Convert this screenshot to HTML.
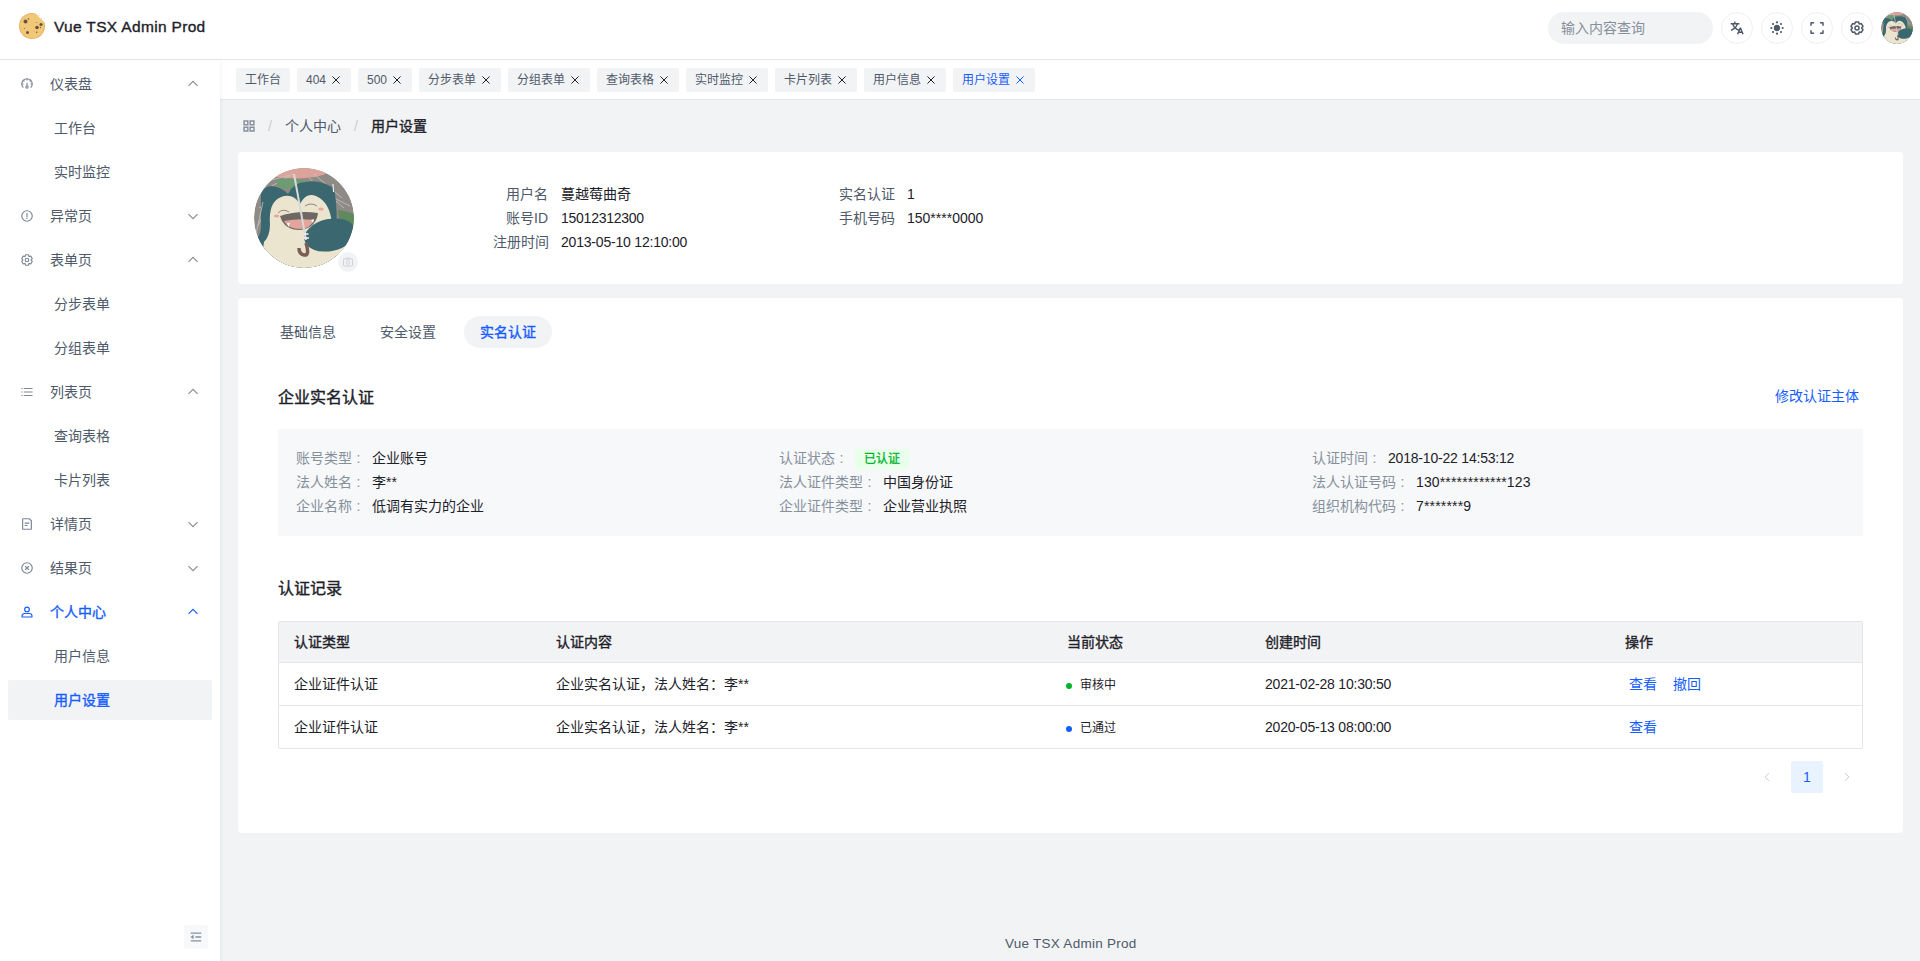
<!DOCTYPE html>
<html lang="zh-CN"><head><meta charset="utf-8">
<style>
*{box-sizing:border-box;margin:0;padding:0}
html,body{width:1920px;height:961px;overflow:hidden;background:#f2f3f5;font-family:"Liberation Sans",sans-serif;color:#1d2129;font-size:14px;line-height:20px}
.abs{position:absolute}
svg{display:block}
.ic{fill:none;stroke:currentColor;stroke-width:4}
#nav{left:0;top:0;width:1920px;height:60px;background:#fff;border-bottom:1px solid #e5e6eb}
#side{left:0;top:60px;width:220px;height:901px;background:#fff;box-shadow:0 2px 5px rgba(0,0,0,.08)}
#tabbar{left:220px;top:60px;width:1700px;height:40px;background:#fff;border-bottom:1px solid #e5e6eb}
.mi{position:absolute;left:8px;width:204px;height:40px;border-radius:2px;color:#4e5969}
.mi .t{position:absolute;left:42px;top:10px;white-space:nowrap}
.mi.sub .t{left:46px}
.mi.act .i,.mi.act .a{color:#165dff}
.mi .i{color:#7d8795;position:absolute;left:12px;top:13px;width:14px;height:14px}
.mi .a{position:absolute;left:178px;top:13px;width:14px;height:14px;color:#86909c}
.tag{position:absolute;top:68px;height:24px;background:#f2f3f5;border-radius:2px;color:#4e5969;font-size:12px;line-height:24px;padding-left:9px;white-space:nowrap}
.tag svg{position:absolute;top:6px;width:12px;height:12px;color:#1d2129}
.tag.act svg{color:#165dff}
.card{position:absolute;background:#fff;border-radius:4px}
.lbl{color:#86909c}
.t14{position:absolute;white-space:nowrap;font-size:14px;line-height:20px}
.t12{position:absolute;white-space:nowrap;font-size:12px;line-height:20px}
.link{color:#165dff}
.med{font-weight:normal;-webkit-text-stroke:0.35px currentColor}
</style></head><body>

<!-- NAVBAR -->
<div id="nav" class="abs">
  <svg class="abs" style="left:18px;top:12px" width="28" height="28" viewBox="0 0 28 28">
    <circle cx="14" cy="14" r="13" fill="#e4ad5a"/>
    <circle cx="14" cy="14" r="12.2" fill="#f0c878"/>
    <path d="M16 -1 L17.5 1.2 Q21.5 5.5 26.8 10.8 L29 13 L29 -1 Z" fill="#fff"/><circle cx="21" cy="3.6" r="0.5" fill="#f0c878"/><circle cx="23.5" cy="6.6" r="0.5" fill="#f0c878"/>
    
    <circle cx="7.5" cy="9.5" r="2" fill="#6b5045"/>
    <circle cx="10.5" cy="7" r="0.8" fill="#6b5045"/>
    <circle cx="19" cy="15.5" r="1.8" fill="#6b5045"/>
    <circle cx="23" cy="12.5" r="1.6" fill="#6b5045"/>
    <circle cx="9.5" cy="20.5" r="1.5" fill="#6b5045"/>
    
    <circle cx="22.4" cy="15.5" r="0.55" fill="#333"/><circle cx="18.7" cy="20.3" r="0.7" fill="#6b5045"/><circle cx="6.4" cy="16.4" r="0.5" fill="#6b5045"/><circle cx="18.4" cy="10.5" r="0.5" fill="#8a6a50"/>
    <circle cx="16" cy="19" r="0.6" fill="#e3a550"/><circle cx="6" cy="16" r="0.6" fill="#e3a550"/>
  </svg>
  <div class="abs" style="left:54px;top:16.5px;font-size:15.5px;letter-spacing:0.33px;line-height:20px;color:#1d2129;white-space:nowrap;-webkit-text-stroke:0.35px #1d2129">Vue TSX Admin Prod</div>

  <div class="abs" style="left:1548px;top:12px;width:165px;height:32px;border-radius:16px;background:#f2f3f5"></div>
  <div class="t14" style="left:1561px;top:18px;color:#86909c">输入内容查询</div>

  <div class="abs nbtn" style="left:1721px"><svg class="ic" viewBox="0 0 48 48" width="14" height="14"><path d="m42 43-2.385-6M26 43l2.384-6m11.231 0-.795-2-4.18-10h-1.28l-4.181 10-.795 2m11.231 0h-11.23M17 5l1 5M5 11h26M11 11s1.889 7.826 6.611 12.174C22.333 27.522 30 31 30 31"/><path d="M25.028 11s-1.889 7.826-6.611 12.174C13.694 27.522 6 31 6 31"/></svg></div>
  <div class="abs nbtn" style="left:1761px"><svg viewBox="0 0 48 48" width="14" height="14" fill="currentColor"><circle cx="24" cy="24" r="9.5"/><circle cx="24" cy="7" r="3.2"/><circle cx="24" cy="41" r="3.2"/><circle cx="7" cy="24" r="3.2"/><circle cx="41" cy="24" r="3.2"/><circle cx="12" cy="12" r="3.2"/><circle cx="36" cy="12" r="3.2"/><circle cx="12" cy="36" r="3.2"/><circle cx="36" cy="36" r="3.2"/></svg></div>
  <div class="abs nbtn" style="left:1801px"><svg class="ic" viewBox="0 0 48 48" width="14" height="14"><path d="M42 17V9a1 1 0 0 0-1-1h-8M6 17V9a1 1 0 0 1 1-1h8m27 23v8a1 1 0 0 1-1 1h-8M6 31v8a1 1 0 0 0 1 1h8"/></svg></div>
  <div class="abs nbtn" style="left:1841px"><svg class="ic" viewBox="0 0 48 48" width="14" height="14"><path d="M18.797 6.732A1 1 0 0 1 19.76 6h8.48a1 1 0 0 1 .964.732l1.285 4.628a1 1 0 0 0 1.213.7l4.651-1.2a1 1 0 0 1 1.116.468l4.24 7.344a1 1 0 0 1-.153 1.2L38.193 23.3a1 1 0 0 0 0 1.402l3.364 3.427a1 1 0 0 1 .153 1.2l-4.240 7.344a1 1 0 0 1-1.116.468l-4.65-1.2a1 1 0 0 0-1.214.7l-1.285 4.628a1 1 0 0 1-.964.732h-8.48a1 1 0 0 1-.963-.732L17.51 36.64a1 1 0 0 0-1.213-.7l-4.65 1.2a1 1 0 0 1-1.116-.468l-4.24-7.344a1 1 0 0 1 .153-1.2L9.809 24.7a1 1 0 0 0 0-1.402l-3.364-3.427a1 1 0 0 1-.153-1.2l4.24-7.344a1 1 0 0 1 1.116-.468l4.65 1.2a1 1 0 0 0 1.213-.7l1.286-4.628Z"/><path d="M30 24a6 6 0 1 1-12 0 6 6 0 0 1 12 0Z"/></svg></div>
  <div class="abs" style="left:1881px;top:12px;width:32px;height:32px;border-radius:50%;overflow:hidden" id="navav"><svg viewBox="0 0 100 100" width="32" height="32" style="display:block">
<defs><clipPath id="cc2"><circle cx="50" cy="50" r="50"/></clipPath></defs>
<g clip-path="url(#cc2)">
<rect width="100" height="100" fill="#8e8a85"/>
<ellipse cx="42" cy="1" rx="34" ry="9.5" fill="#dba39a"/>
<path d="M10 14 L40 6 M14 20 L36 8 M60 6 L88 30 M55 10 L90 40 M5 40 L20 30 M4 58 L12 40 M80 30 L96 38" stroke="#c9c4bf" stroke-width="0.8"/>
<path d="M22 12 Q36 8 54 14 Q44 22 24 20 Z" fill="#6f9b73"/>
<path d="M7 26 Q10 19 16 18 Q26 18 34 26 Q40 14 52 14 Q62 12 72 16 L80 20 Q84 40 82 60 L86 100 L0 100 L0 72 Q6 70 7 60 Z" fill="#3b6870"/><path d="M1.5 68 L9 34" stroke="#c9c4bf" stroke-width="0.8"/>
<path d="M84 42 Q96 44 100 46 L100 60 L86 58 Z" fill="#5e8a5e"/>
<path d="M16 56 Q14 32 30 28 Q40 26 46 36 Q52 24 62 28 Q76 34 78 56 L100 72 L100 100 L6 100 L10 74 Q16 68 16 56 Z" fill="#ebe5cf"/>
<path d="M26 48 Q44 42 64 45 Q62 60 46 62 Q30 62 26 48 Z" fill="#6d6864"/>
<path d="M30 53 Q44 50 60 52 Q56 61 46 61 Q34 61 30 53 Z" fill="#e3a49b"/>
<path d="M33 55 l1.6 4 l1.2 -4 z M60 51 l-1 4 l-2 -3 z" fill="#fff"/>
<path d="M24 45 Q29 40 35 44" stroke="#8a7a70" stroke-width="0.9" fill="none"/>
<path d="M51 38 Q57 34 63 38" stroke="#8a7a70" stroke-width="0.9" fill="none"/>
<ellipse cx="22.5" cy="48" rx="2.8" ry="1.6" fill="#e8a8a0"/>
<ellipse cx="67" cy="41" rx="2.8" ry="1.6" fill="#e8a8a0"/>
<ellipse cx="76" cy="67" rx="26" ry="16" transform="rotate(-12 76 67)" fill="#3b6870"/>
<path d="M40 6 L52 72" stroke="#d8d8d8" stroke-width="2"/>
<path d="M49.5 66 h5 M50 70 h5" stroke="#f4f4f4" stroke-width="1.6"/>
<path d="M52 75 Q56 88 50 87 Q45 86 45 80" stroke="#7d5e55" stroke-width="3.5" fill="none"/>
<path d="M79 16 l0.6 8" stroke="#eee" stroke-width="1.2"/>
</g>
</svg>
</div>
</div>
<style>
.nbtn{top:12px;width:32px;height:32px;border-radius:50%;border:1px solid #eef0f3;color:#4e5969;background:#fff}
.nbtn svg{position:absolute;left:7px;top:7px;width:16px;height:16px}
.nbtn .ic{stroke-width:4.5}
</style>

<!-- SIDEBAR -->
<div id="tabbar" class="abs"></div>
<div id="side" class="abs"></div>
<div id="menu">
<div class="mi" style="top:64px"><svg class="i ic" viewBox="0 0 48 48"><path d="M11.3 36.7A18 18 0 1 1 36.7 36.7M24 6v6M11.3 11.3l4 4M36.7 11.3l-4 4M6 24h6M42 24h-6M24 20v10"/><circle cx="24" cy="34" r="4"/></svg><div class="t">仪表盘</div><svg class="a ic" viewBox="0 0 48 48"><path d="M39.6 30.557 24.043 15 8.487 30.557"/></svg></div>
<div class="mi sub" style="top:108px"><div class="t">工作台</div></div>
<div class="mi sub" style="top:152px"><div class="t">实时监控</div></div>
<div class="mi" style="top:196px"><svg class="i ic" viewBox="0 0 48 48"><path d="M24 28V14m0 16v4M6 24c0-9.941 8.059-18 18-18s18 8.059 18 18-8.059 18-18 18S6 33.941 6 24Z"/></svg><div class="t">异常页</div><svg class="a ic" viewBox="0 0 48 48"><path d="M39.6 17.443 24.043 33 8.487 17.443"/></svg></div>
<div class="mi" style="top:240px"><svg class="i ic" viewBox="0 0 48 48"><path d="M18.797 6.732A1 1 0 0 1 19.76 6h8.48a1 1 0 0 1 .964.732l1.285 4.628a1 1 0 0 0 1.213.7l4.651-1.2a1 1 0 0 1 1.116.468l4.24 7.344a1 1 0 0 1-.153 1.2L38.193 23.3a1 1 0 0 0 0 1.402l3.364 3.427a1 1 0 0 1 .153 1.2l-4.240 7.344a1 1 0 0 1-1.116.468l-4.65-1.2a1 1 0 0 0-1.214.7l-1.285 4.628a1 1 0 0 1-.964.732h-8.48a1 1 0 0 1-.963-.732L17.51 36.64a1 1 0 0 0-1.213-.7l-4.65 1.2a1 1 0 0 1-1.116-.468l-4.24-7.344a1 1 0 0 1 .153-1.2L9.809 24.7a1 1 0 0 0 0-1.402l-3.364-3.427a1 1 0 0 1-.153-1.2l4.24-7.344a1 1 0 0 1 1.116-.468l4.65 1.2a1 1 0 0 0 1.213-.7l1.286-4.628Z"/><path d="M30 24a6 6 0 1 1-12 0 6 6 0 0 1 12 0Z"/></svg><div class="t">表单页</div><svg class="a ic" viewBox="0 0 48 48"><path d="M39.6 30.557 24.043 15 8.487 30.557"/></svg></div>
<div class="mi sub" style="top:284px"><div class="t">分步表单</div></div>
<div class="mi sub" style="top:328px"><div class="t">分组表单</div></div>
<div class="mi" style="top:372px"><svg class="i ic" viewBox="0 0 48 48"><path d="M13 24h30M5 12h4m4 24h30M13 12h30M5 24h4M5 36h4"/></svg><div class="t">列表页</div><svg class="a ic" viewBox="0 0 48 48"><path d="M39.6 30.557 24.043 15 8.487 30.557"/></svg></div>
<div class="mi sub" style="top:416px"><div class="t">查询表格</div></div>
<div class="mi sub" style="top:460px"><div class="t">卡片列表</div></div>
<div class="mi" style="top:504px"><svg class="i ic" viewBox="0 0 48 48"><path d="M16 21h16m-16 8h10m11 13H11a2 2 0 0 1-2-2V8a2 2 0 0 1 2-2h21l7 7v27a2 2 0 0 1-2 2Z"/></svg><div class="t">详情页</div><svg class="a ic" viewBox="0 0 48 48"><path d="M39.6 17.443 24.043 33 8.487 17.443"/></svg></div>
<div class="mi" style="top:548px"><svg class="i ic" viewBox="0 0 48 48"><path d="m17.643 17.643 6.364 6.364m0 0 6.364 6.364m-6.364-6.364 6.364-6.364m-6.364 6.364-6.364 6.364M42 24c0 9.941-8.059 18-18 18S6 33.941 6 24 14.059 6 24 6s18 8.059 18 18Z"/></svg><div class="t">结果页</div><svg class="a ic" viewBox="0 0 48 48"><path d="M39.6 17.443 24.043 33 8.487 17.443"/></svg></div>
<div class="mi act" style="top:592px;color:#165dff"><svg class="i ic" viewBox="0 0 48 48"><path d="M7 37c0-4.97 4.03-8 9-8h16c4.97 0 9 3.03 9 8v3a1 1 0 0 1-1 1H8a1 1 0 0 1-1-1v-3Z"/><path d="M32 15a8 8 0 1 1-16 0 8 8 0 0 1 16 0Z"/></svg><div class="t med">个人中心</div><svg class="a ic" viewBox="0 0 48 48"><path d="M39.6 30.557 24.043 15 8.487 30.557"/></svg></div>
<div class="mi sub" style="top:636px"><div class="t">用户信息</div></div>
<div class="mi sub" style="top:680px;background:#f2f3f5;color:#165dff"><div class="t med">用户设置</div></div>
</div>

<!-- TABBAR -->

<div class="tag" style="left:236px;width:54px">工作台</div>
<div class="tag" style="left:297px;width:54px">404<svg class="ic" style="left:33px;stroke-width:4" viewBox="0 0 48 48"><path d="M9.857 9.858 24 24m0 0 14.142 14.142M24 24 38.142 9.858M24 24 9.857 38.142"/></svg></div>
<div class="tag" style="left:358px;width:54px">500<svg class="ic" style="left:33px;stroke-width:4" viewBox="0 0 48 48"><path d="M9.857 9.858 24 24m0 0 14.142 14.142M24 24 38.142 9.858M24 24 9.857 38.142"/></svg></div>
<div class="tag" style="left:419px;width:82px">分步表单<svg class="ic" style="left:61px;stroke-width:4" viewBox="0 0 48 48"><path d="M9.857 9.858 24 24m0 0 14.142 14.142M24 24 38.142 9.858M24 24 9.857 38.142"/></svg></div>
<div class="tag" style="left:508px;width:82px">分组表单<svg class="ic" style="left:61px;stroke-width:4" viewBox="0 0 48 48"><path d="M9.857 9.858 24 24m0 0 14.142 14.142M24 24 38.142 9.858M24 24 9.857 38.142"/></svg></div>
<div class="tag" style="left:597px;width:82px">查询表格<svg class="ic" style="left:61px;stroke-width:4" viewBox="0 0 48 48"><path d="M9.857 9.858 24 24m0 0 14.142 14.142M24 24 38.142 9.858M24 24 9.857 38.142"/></svg></div>
<div class="tag" style="left:686px;width:82px">实时监控<svg class="ic" style="left:61px;stroke-width:4" viewBox="0 0 48 48"><path d="M9.857 9.858 24 24m0 0 14.142 14.142M24 24 38.142 9.858M24 24 9.857 38.142"/></svg></div>
<div class="tag" style="left:775px;width:82px">卡片列表<svg class="ic" style="left:61px;stroke-width:4" viewBox="0 0 48 48"><path d="M9.857 9.858 24 24m0 0 14.142 14.142M24 24 38.142 9.858M24 24 9.857 38.142"/></svg></div>
<div class="tag" style="left:864px;width:82px">用户信息<svg class="ic" style="left:61px;stroke-width:4" viewBox="0 0 48 48"><path d="M9.857 9.858 24 24m0 0 14.142 14.142M24 24 38.142 9.858M24 24 9.857 38.142"/></svg></div>
<div class="tag act" style="left:953px;width:82px;color:#165dff">用户设置<svg class="ic" style="left:61px;stroke-width:4" viewBox="0 0 48 48"><path d="M9.857 9.858 24 24m0 0 14.142 14.142M24 24 38.142 9.858M24 24 9.857 38.142"/></svg></div>


<!-- BREADCRUMB -->
<svg class="abs ic" style="left:242px;top:119px;color:#86909c;stroke-width:5" width="14" height="14" viewBox="0 0 48 48"><path d="M7 7h13v13H7zM28 7h13v13H28zM7 28h13v13H7zM28 28h13v13H28z"/></svg>
<div class="t14" style="left:268px;top:116px;color:#c9cdd4">/</div>
<div class="t14" style="left:285px;top:116px;color:#4e5969">个人中心</div>
<div class="t14" style="left:354px;top:116px;color:#c9cdd4">/</div>
<div class="t14 med" style="left:371px;top:116px;color:#1d2129">用户设置</div>

<!-- CARD 1 -->
<div class="card" style="left:238px;top:152px;width:1665px;height:132px"></div>
<div id="bigav" class="abs" style="left:254px;top:168px;width:100px;height:100px;border-radius:50%;overflow:hidden"><svg viewBox="0 0 100 100" width="100" height="100" style="display:block">
<defs><clipPath id="cc1"><circle cx="50" cy="50" r="50"/></clipPath></defs>
<g clip-path="url(#cc1)">
<rect width="100" height="100" fill="#8e8a85"/>
<ellipse cx="42" cy="1" rx="34" ry="9.5" fill="#dba39a"/>
<path d="M10 14 L40 6 M14 20 L36 8 M60 6 L88 30 M55 10 L90 40 M5 40 L20 30 M4 58 L12 40 M80 30 L96 38" stroke="#c9c4bf" stroke-width="0.8"/>
<path d="M22 12 Q36 8 54 14 Q44 22 24 20 Z" fill="#6f9b73"/>
<path d="M7 26 Q10 19 16 18 Q26 18 34 26 Q40 14 52 14 Q62 12 72 16 L80 20 Q84 40 82 60 L86 100 L0 100 L0 72 Q6 70 7 60 Z" fill="#3b6870"/><path d="M1.5 68 L9 34" stroke="#c9c4bf" stroke-width="0.8"/>
<path d="M84 42 Q96 44 100 46 L100 60 L86 58 Z" fill="#5e8a5e"/>
<path d="M16 56 Q14 32 30 28 Q40 26 46 36 Q52 24 62 28 Q76 34 78 56 L100 72 L100 100 L6 100 L10 74 Q16 68 16 56 Z" fill="#ebe5cf"/>
<path d="M26 48 Q44 42 64 45 Q62 60 46 62 Q30 62 26 48 Z" fill="#6d6864"/>
<path d="M30 53 Q44 50 60 52 Q56 61 46 61 Q34 61 30 53 Z" fill="#e3a49b"/>
<path d="M33 55 l1.6 4 l1.2 -4 z M60 51 l-1 4 l-2 -3 z" fill="#fff"/>
<path d="M24 45 Q29 40 35 44" stroke="#8a7a70" stroke-width="0.9" fill="none"/>
<path d="M51 38 Q57 34 63 38" stroke="#8a7a70" stroke-width="0.9" fill="none"/>
<ellipse cx="22.5" cy="48" rx="2.8" ry="1.6" fill="#e8a8a0"/>
<ellipse cx="67" cy="41" rx="2.8" ry="1.6" fill="#e8a8a0"/>
<ellipse cx="76" cy="67" rx="26" ry="16" transform="rotate(-12 76 67)" fill="#3b6870"/>
<path d="M40 6 L52 72" stroke="#d8d8d8" stroke-width="2"/>
<path d="M49.5 66 h5 M50 70 h5" stroke="#f4f4f4" stroke-width="1.6"/>
<path d="M52 75 Q56 88 50 87 Q45 86 45 80" stroke="#7d5e55" stroke-width="3.5" fill="none"/>
<path d="M79 16 l0.6 8" stroke="#eee" stroke-width="1.2"/>
</g>
</svg>
</div>
<div class="abs" style="left:338px;top:252px;width:20px;height:20px;border-radius:50%;background:#f2f3f5"></div>
<svg class="abs ic" style="left:342px;top:256px;color:#c9cdd4;stroke-width:3.5" width="12" height="12" viewBox="0 0 48 48"><path d="m33 12-1.862-3.724A.5.5 0 0 0 30.691 8H17.309a.5.5 0 0 0-.447.276L15 12m16 14a7 7 0 1 1-14 0 7 7 0 0 1 14 0ZM7 40h34a1 1 0 0 0 1-1V13a1 1 0 0 0-1-1H7a1 1 0 0 0-1 1v26a1 1 0 0 0 1 1Z"/></svg>

<div class="t14 lbl" style="left:493px;top:184px;width:55px;text-align:right;color:#4e5969">用户名</div>
<div class="t14" style="left:561px;top:184px">蔓越莓曲奇</div>
<div class="t14 lbl" style="left:493px;top:208px;width:55px;text-align:right;color:#4e5969">账号ID</div>
<div class="t14" style="left:561px;top:208px;letter-spacing:-0.25px">15012312300</div>
<div class="t14 lbl" style="left:493px;top:232px;width:55px;text-align:right;color:#4e5969">注册时间</div>
<div class="t14" style="left:561px;top:232px;letter-spacing:-0.2px">2013-05-10 12:10:00</div>
<div class="t14 lbl" style="left:839px;top:184px;color:#4e5969">实名认证</div>
<div class="t14" style="left:907px;top:184px">1</div>
<div class="t14 lbl" style="left:839px;top:208px;color:#4e5969">手机号码</div>
<div class="t14" style="left:907px;top:208px">150****0000</div>

<!-- CARD 2 -->
<div class="card" style="left:238px;top:298px;width:1665px;height:535px"></div>
<div class="t14" style="left:280px;top:322px;color:#4e5969">基础信息</div>
<div class="t14" style="left:380px;top:322px;color:#4e5969">安全设置</div>
<div class="abs" style="left:464px;top:316px;width:88px;height:32px;border-radius:16px;background:#f2f3f5"></div>
<div class="t14 med" style="left:480px;top:322px;color:#165dff">实名认证</div>

<div class="abs med" style="left:278px;top:388px;font-size:16px;line-height:20px;white-space:nowrap;-webkit-text-stroke:0.4px #1d2129">企业实名认证</div>
<div class="t14 link" style="left:1775px;top:386px">修改认证主体</div>

<div class="abs" style="left:278px;top:429px;width:1585px;height:107px;background:#f7f8fa"></div>
<div class="t14 lbl" style="left:296px;top:448px">账号类型<span style="margin-left:4.5px">:</span></div><div class="t14" style="left:372px;top:448px">企业账号</div>
<div class="t14 lbl" style="left:296px;top:472px">法人姓名<span style="margin-left:4.5px">:</span></div><div class="t14" style="left:372px;top:472px">李**</div>
<div class="t14 lbl" style="left:296px;top:496px">企业名称<span style="margin-left:4.5px">:</span></div><div class="t14" style="left:372px;top:496px">低调有实力的企业</div>

<div class="t14 lbl" style="left:779px;top:448px">认证状态<span style="margin-left:4.5px">:</span></div>
<div class="abs" style="left:855px;top:449px;width:54px;height:20px;background:#e8ffea;border-radius:2px"></div>
<div class="t12" style="left:864px;top:449px;color:#00b42a;-webkit-text-stroke:0.3px #00b42a">已认证</div>
<div class="t14 lbl" style="left:779px;top:472px">法人证件类型<span style="margin-left:4.5px">:</span></div><div class="t14" style="left:883px;top:472px">中国身份证</div>
<div class="t14 lbl" style="left:779px;top:496px">企业证件类型<span style="margin-left:4.5px">:</span></div><div class="t14" style="left:883px;top:496px">企业营业执照</div>

<div class="t14 lbl" style="left:1312px;top:448px">认证时间<span style="margin-left:4.5px">:</span></div><div class="t14" style="left:1388px;top:448px;letter-spacing:-0.2px">2018-10-22 14:53:12</div>
<div class="t14 lbl" style="left:1312px;top:472px">法人认证号码<span style="margin-left:4.5px">:</span></div><div class="t14" style="left:1416px;top:472px;letter-spacing:0.14px">130************123</div>
<div class="t14 lbl" style="left:1312px;top:496px">组织机构代码<span style="margin-left:4.5px">:</span></div><div class="t14" style="left:1416px;top:496px;letter-spacing:0.17px">7*******9</div>

<div class="abs med" style="left:278px;top:579px;font-size:16px;line-height:20px;white-space:nowrap;-webkit-text-stroke:0.4px #1d2129">认证记录</div>

<!-- TABLE -->
<div class="abs" style="left:278px;top:621px;width:1585px;height:128px;border:1px solid #e5e6eb;border-radius:2px;overflow:hidden">
  <div class="abs" style="left:0;top:0;width:1583px;height:41px;background:#f2f3f5;border-bottom:1px solid #e5e6eb"></div>
  <div class="abs" style="left:0;top:83px;width:1583px;height:1px;background:#e5e6eb"></div>
</div>
<div class="t14 med" style="left:294px;top:632px">认证类型</div>
<div class="t14 med" style="left:556px;top:632px">认证内容</div>
<div class="t14 med" style="left:1067px;top:632px">当前状态</div>
<div class="t14 med" style="left:1265px;top:632px">创建时间</div>
<div class="t14 med" style="left:1625px;top:632px">操作</div>

<div class="t14" style="left:294px;top:674px">企业证件认证</div>
<div class="t14" style="left:556px;top:674px">企业实名认证，法人姓名：李**</div>
<div class="abs" style="left:1066px;top:683px;width:6px;height:6px;border-radius:50%;background:#00b42a"></div>
<div class="t12" style="left:1080px;top:675px">审核中</div>
<div class="t14" style="left:1265px;top:674px;letter-spacing:-0.2px">2021-02-28 10:30:50</div>
<div class="t14 link" style="left:1629px;top:674px">查看</div>
<div class="t14 link" style="left:1673px;top:674px">撤回</div>

<div class="t14" style="left:294px;top:717px">企业证件认证</div>
<div class="t14" style="left:556px;top:717px">企业实名认证，法人姓名：李**</div>
<div class="abs" style="left:1066px;top:726px;width:6px;height:6px;border-radius:50%;background:#165dff"></div>
<div class="t12" style="left:1080px;top:718px">已通过</div>
<div class="t14" style="left:1265px;top:717px;letter-spacing:-0.2px">2020-05-13 08:00:00</div>
<div class="t14 link" style="left:1629px;top:717px">查看</div>

<!-- PAGINATION -->
<svg class="abs ic" style="left:1761px;top:771px;color:#c9cdd4" width="12" height="12" viewBox="0 0 48 48"><path d="M32 8.4 16.444 23.956 32 39.513"/></svg>
<div class="abs" style="left:1791px;top:761px;width:32px;height:32px;border-radius:2px;background:#e8f3ff;color:#165dff;text-align:center;line-height:32px;font-size:14px">1</div>
<svg class="abs ic" style="left:1841px;top:771px;color:#c9cdd4" width="12" height="12" viewBox="0 0 48 48"><path d="m16 39.513 15.556-15.557L16 8.4"/></svg>

<!-- FOOTER -->
<div class="t14" style="left:1005px;top:933.5px;font-size:13.5px;letter-spacing:0.26px;color:#4e5969">Vue TSX Admin Prod</div>

<!-- collapse btn -->
<div class="abs" style="left:184px;top:925px;width:24px;height:24px;border-radius:2px;background:#f7f8fa"></div>
<svg class="abs ic" style="left:189px;top:930px;color:#86909c;stroke-width:4.5" width="14" height="14" viewBox="0 0 48 48"><path d="M42 11H6M42 24H22M42 37H6M13.66 26.912l-4.82-3.118 4.82-3.118v6.236Z"/></svg>

</body></html>
